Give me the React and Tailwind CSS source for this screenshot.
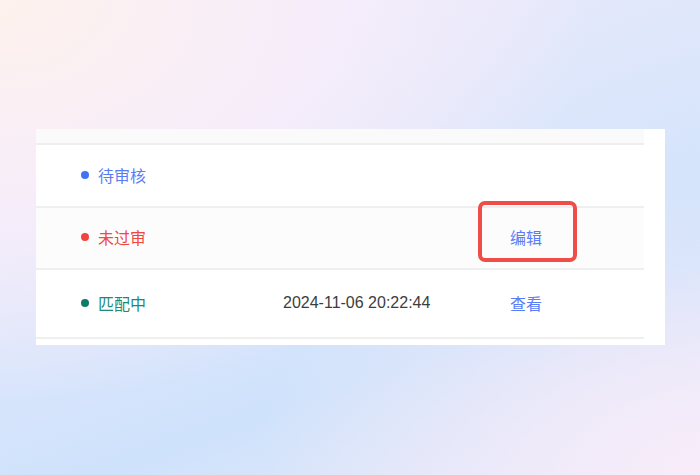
const rows = [
  { status: '待审核', dot: 'bg-[#3f74f6]', text: 'text-[#5a7cf6]', time: '', action: '', h: 'h-[63px]', bg: 'bg-white' },
  { status: '未过审', dot: 'bg-[#f2433f]', text: 'text-[#f2473f]', time: '', action: '编辑', h: 'h-[62px]', bg: 'bg-[#fcfcfc]' },
  { status: '匹配中', dot: 'bg-[#0e7a68]', text: 'text-[#1b8a7b]', time: '2024-11-06 20:22:44', action: '查看', h: 'h-[69px]', bg: 'bg-white' },
];

export default function App() {
  return (
    <div className="h-[475px] w-[700px] overflow-hidden bg-[radial-gradient(ellipse_at_0%_0%,#fdf2ec_0%,#f7edfa_30%,transparent_60%),radial-gradient(ellipse_at_100%_100%,#f8ecf9_0%,transparent_45%),linear-gradient(160deg,#f3ecfa_0%,#dbe6fb_45%,#cfe2fb_70%,#e6e9fa_100%)] pt-[129px] font-['Noto_Sans_CJK_SC','Liberation_Sans',sans-serif]">
      <div className="relative ml-[36px] h-[216px] w-[629px] bg-white">
        <div className="w-[608px]">
          <div className="h-[16px] border-b-2 border-[#efefef] bg-[#fafafa]" />
          {rows.map((row) => (
            <div key={row.status} className={`flex items-center border-b-2 border-[#efefef] pb-[2px] ${row.h} ${row.bg}`}>
              <div className="flex w-[247px] items-center pl-[45px]">
                <span className={`h-[8px] w-[8px] rounded-full ${row.dot}`} />
                <span className={`ml-[9px] text-[16px] leading-none ${row.text}`}>{row.status}</span>
              </div>
              <div className="w-[227px] font-['Liberation_Sans',sans-serif] text-[16px] leading-none text-[#3d3d3d]">
                {row.time}
              </div>
              <div className="text-[16px] leading-none text-[#5a7cf6]">{row.action}</div>
            </div>
          ))}
        </div>
        <div className="absolute left-[442px] top-[72px] h-[61px] w-[99px] rounded-[7px] border-4 border-[#f04d48]" />
      </div>
    </div>
  );
}
